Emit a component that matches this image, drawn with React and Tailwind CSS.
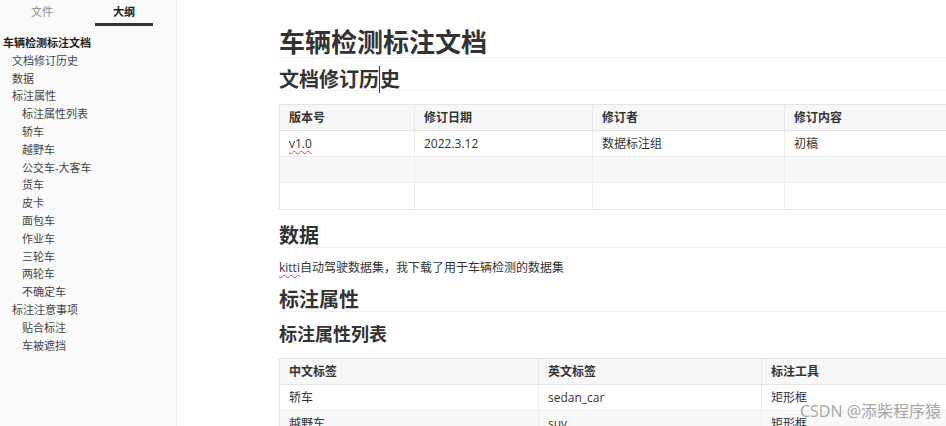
import React from 'react'

const font = { fontFamily: '"Open Sans", "Noto Sans CJK SC", sans-serif' }

const outline = [
  { text: '车辆检测标注文档', level: 0 },
  { text: '文档修订历史', level: 1 },
  { text: '数据', level: 1 },
  { text: '标注属性', level: 1 },
  { text: '标注属性列表', level: 2 },
  { text: '轿车', level: 2 },
  { text: '越野车', level: 2 },
  { text: '公交车-大客车', level: 2 },
  { text: '货车', level: 2 },
  { text: '皮卡', level: 2 },
  { text: '面包车', level: 2 },
  { text: '作业车', level: 2 },
  { text: '三轮车', level: 2 },
  { text: '两轮车', level: 2 },
  { text: '不确定车', level: 2 },
  { text: '标注注意事项', level: 1 },
  { text: '贴合标注', level: 2 },
  { text: '车被遮挡', level: 2 },
]

function Sidebar() {
  return (
    <div className="w-[177px] shrink-0 bg-[#fafafa] border-r border-[#ececec] h-full">
      {/* tabs */}
      <div className="flex h-[26px] pt-[3px]">
        <div className="w-[84px] text-center text-[11px] leading-[17px] text-[#8a8a8a]">文件</div>
        <div className="w-[58px] ml-[11px] flex flex-col items-center">
          <div className="text-[11px] leading-[17px] font-bold text-[#222]">大纲</div>
          <div className="mt-[3px] h-[3px] w-full bg-[#333]" />
        </div>
      </div>
      <div className="pt-[8px]">
        {outline.map((item, i) => (
          <div
            key={i}
            className={
              'h-[17.8px] leading-[17.8px] text-[11px] whitespace-nowrap ' +
              (item.level === 0
                ? 'pl-[3px] font-bold text-[#222]'
                : item.level === 1
                ? 'pl-[12px] text-[#444]'
                : 'pl-[22px] text-[#444]')
            }
          >
            {item.text}
          </div>
        ))}
      </div>
    </div>
  )
}

function Table({ cols, rows }) {
  return (
    <div className="border border-[#e4e4e4] text-[12px] text-[#333] w-max">
      <div className="flex h-[26px] bg-[#f7f7f7] font-bold border-b border-[#e4e4e4]">
        {cols.map((c, i) => (
          <div
            key={i}
            style={{ width: c.w }}
            className={'flex items-center pl-[9px] ' + (i > 0 ? 'border-l border-[#e8e8e8]' : '')}
          >
            {c.label}
          </div>
        ))}
      </div>
      {rows.map((r, ri) => (
        <div
          key={ri}
          className={
            'flex h-[26px] ' +
            (ri % 2 === 1 ? 'bg-[#f8f8f8] ' : 'bg-white ') +
            (ri < rows.length - 1 ? 'border-b border-[#ececec]' : '')
          }
        >
          {cols.map((c, i) => (
            <div
              key={i}
              style={{ width: c.w }}
              className={'flex items-center pl-[9px] ' + (i > 0 ? 'border-l border-[#ececec]' : '')}
            >
              {r[i]}
            </div>
          ))}
        </div>
      ))}
    </div>
  )
}

const spell = 'underline decoration-wavy decoration-[#e04040] decoration-1 underline-offset-2'

export default function App() {
  return (
    <div className="relative flex w-[946px] h-[426px] overflow-hidden bg-white" style={font}>
      <Sidebar />
      <div className="flex-1 overflow-hidden pl-[102px] pt-[28px] text-[#333]">
        <h1 className="text-[26px] leading-[28px] font-bold pb-[1px] border-b border-[#f0f0f0] w-[900px]">
          车辆检测标注文档
        </h1>
        <h2 className="mt-[11px] text-[20px] leading-[21px] font-bold border-b border-[#f0f0f0] w-[900px]">
          文档修订<span className="border-r border-[#333]">历</span>史
        </h2>
        <div className="mt-[13px]">
          <Table
            cols={[
              { label: '版本号', w: 134 },
              { label: '修订日期', w: 178 },
              { label: '修订者', w: 192 },
              { label: '修订内容', w: 300 },
            ]}
            rows={[
              [<span className={spell}>v1.0</span>, '2022.3.12', '数据标注组', '初稿'],
              ['', '', '', ''],
              ['', '', '', ''],
            ]}
          />
        </div>
        <h2 className="mt-[15px] text-[20px] leading-[22px] font-bold border-b border-[#f0f0f0] w-[900px]">
          数据
        </h2>
        <p className="mt-[10px] text-[12px] leading-[20px] text-[#333]">
          <span className={spell}>kitti</span>自动驾驶数据集，我下载了用于车辆检测的数据集
        </p>
        <h2 className="mt-[11px] text-[20px] leading-[22px] font-bold border-b border-[#f0f0f0] w-[900px]">
          标注属性
        </h2>
        <h3 className="mt-[11px] text-[18px] leading-[22px] font-bold">标注属性列表</h3>
        <div className="mt-[13px]">
          <Table
            cols={[
              { label: '中文标签', w: 258 },
              { label: '英文标签', w: 223 },
              { label: '标注工具', w: 300 },
            ]}
            rows={[
              ['轿车', 'sedan_car', '矩形框'],
              ['越野车', 'suv', '矩形框'],
            ]}
          />
        </div>
      </div>
      <div className="absolute right-[5px] bottom-[5px] text-[16px] text-[#9a9a9a]/90 leading-[20px]">
        CSDN @添柴程序猿
      </div>
    </div>
  )
}
